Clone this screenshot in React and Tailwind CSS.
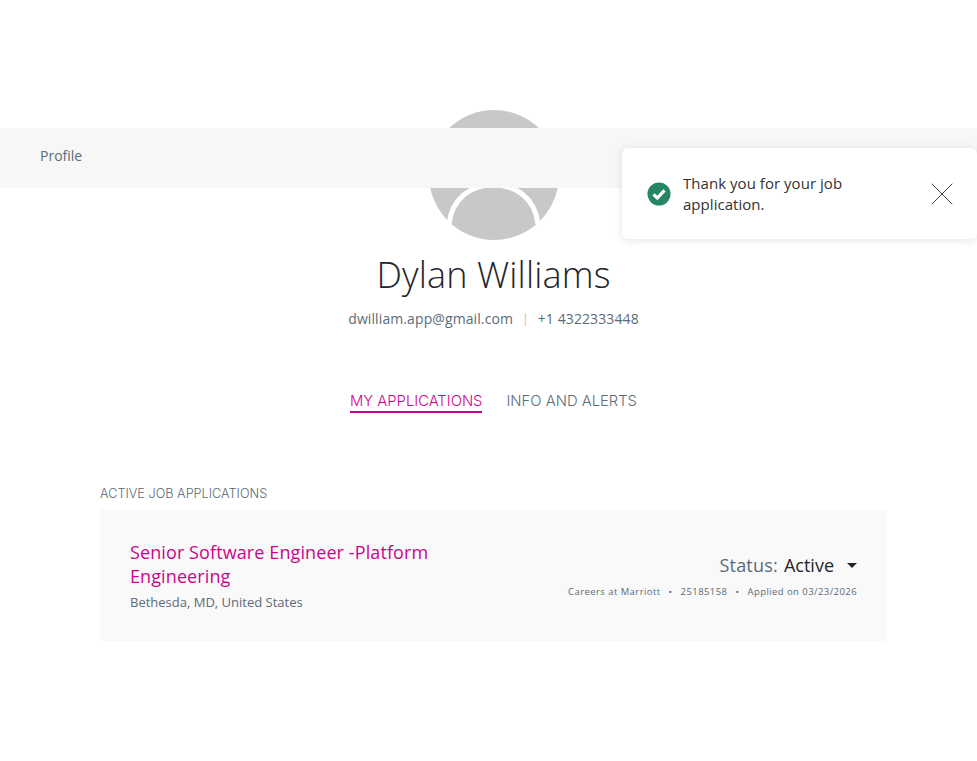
import { X } from 'lucide-react';

const AvatarIcon = () => (
  <svg width="130" height="130" viewBox="0 0 130 130" className="block">
    <circle cx="65" cy="65" r="65" fill="#c8c8c8" />
    <path d="M20 114 C23 88 42 75 64.5 75 C87 75 106 88 109 114" fill="none" stroke="#fff" strokeWidth="5" />
  </svg>
);

const CheckBadge = () => (
  <svg width="24" height="24" viewBox="0 0 24 24" className="shrink-0">
    <circle cx="12" cy="12" r="11.5" fill="#268567" />
    <path d="M6.5 12.3 L10.3 16 L17.5 8.4" fill="none" stroke="#fff" strokeWidth="3.2" />
  </svg>
);

const App = () => {
  return (
    <div className="relative min-h-[761px] bg-white overflow-hidden font-['Open_Sans',sans-serif] text-[#5b6b78]">
      {/* Profile bar, sits over the avatar */}
      <div className="absolute top-[128px] left-0 right-0 h-[60px] bg-[#f7f7f5] flex items-center pl-10 pb-1 text-sm text-[#5b6b78]">
        Profile
      </div>

      {/* Toast */}
      <div className="absolute top-[148px] right-0 w-[355px] h-[91px] bg-white rounded-md shadow-[0_1px_8px_rgba(0,0,0,0.12)] flex items-center pl-[25px] pr-[15px]">
        <CheckBadge />
        <p className="ml-[12px] w-[200px] text-[15px] tracking-[0.04px] leading-[21px] text-[#333]">Thank you for your job application.</p>
        <X className="ml-auto" size={40} strokeWidth={0.6} color="#444" />
      </div>

      {/* content is a little wider than the window */}
      <div className="w-[987px]">
        <div className="pt-[110px] flex flex-col items-center">
          <AvatarIcon />
          <h1 className="mt-[10px] text-[36px] tracking-[0.15px] leading-[50px] font-light text-[#22262a]">Dylan Williams</h1>
          <div className="mt-[9px] flex items-center text-sm tracking-[0.1px] leading-5">
            <span>dwilliam.app@gmail.com</span>
            <span className="mx-[9px] text-[#bbb] text-xs">|</span>
            <span>+1 4322333448</span>
          </div>

          <div className="mt-[62px] flex gap-6 text-[14.8px] font-['Inter',sans-serif] font-light">
            <span className="leading-5 text-[#c9058d] border-b-2 border-[#c9058d]">MY APPLICATIONS</span>
            <span className="leading-5 text-[#5b6b78]">INFO AND ALERTS</span>
          </div>
        </div>

        <div className="mt-[73px] mx-[100px]">
          <h2 className="text-[12.7px] leading-4 font-['Inter',sans-serif] font-light text-[#5b6b78]">ACTIVE JOB APPLICATIONS</h2>
          <div className="mt-[8px] h-[131px] bg-[#f9f9f9] flex justify-between items-center px-[30px]">
            <div className="w-[340px]">
              <div className="mt-[1px] text-lg tracking-[0.1px] leading-6 text-[#c9058d]">Senior Software Engineer -Platform Engineering</div>
              <div className="mt-[4px] text-[13px] leading-5">Bethesda, MD, United States</div>
            </div>
            <div className="flex flex-col items-end pt-[2px]">
              <div className="flex items-center text-lg leading-6">
                <span className="tracking-[0.2px]">Status:</span>
                <span className="ml-[6px] text-[#22262a]">Active</span>
                <span className="ml-[13px] w-0 h-0 border-x-[5.5px] border-x-transparent border-t-[5px] border-t-[#22262a]" />
              </div>
              <div className="mt-[7px] flex items-center text-[9.5px] leading-4 tracking-[0.43px]">
                <span>Careers at Marriott</span>
                <span className="mx-2">•</span>
                <span>25185158</span>
                <span className="mx-2">•</span>
                <span>Applied on 03/23/2026</span>
              </div>
            </div>
          </div>
        </div>
      </div>
    </div>
  );
};

export default App;
